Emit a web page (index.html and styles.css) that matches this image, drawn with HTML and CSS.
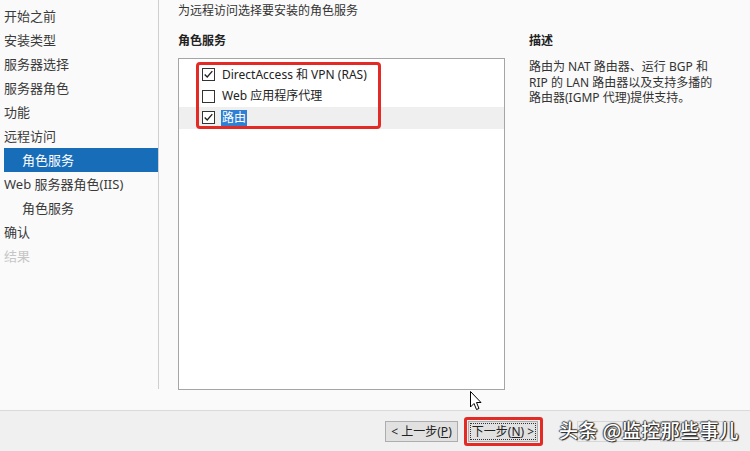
FILE: index.html
```html
<!DOCTYPE html>
<html lang="zh-CN">
<head>
<meta charset="utf-8">
<title>角色服务</title>
<link rel="stylesheet" href="styles.css">
</head>
<body>
<div class="window">
  <div class="main">
    <nav class="nav">
      <div class="nav-item">开始之前</div>
      <div class="nav-item">安装类型</div>
      <div class="nav-item">服务器选择</div>
      <div class="nav-item">服务器角色</div>
      <div class="nav-item">功能</div>
      <div class="nav-item">远程访问</div>
      <div class="nav-item sub active">角色服务</div>
      <div class="nav-item">Web 服务器角色(IIS)</div>
      <div class="nav-item sub">角色服务</div>
      <div class="nav-item">确认</div>
      <div class="nav-item disabled">结果</div>
    </nav>
    <section class="content">
      <div class="subtitle">为远程访问选择要安装的角色服务</div>
      <div class="grid">
        <div class="heading">角色服务</div>
        <div class="heading">描述</div>
        <div class="listbox">
          <div class="row">
            <span class="cb checked"><svg viewBox="0 0 13 13" width="11" height="11"><path d="M2 6.5 L5 9.5 L11 2.5" fill="none" stroke="#222" stroke-width="1.6"/></svg></span>
            <span class="label">DirectAccess 和 VPN (RAS)</span>
          </div>
          <div class="row">
            <span class="cb"></span>
            <span class="label">Web 应用程序代理</span>
          </div>
          <div class="row selected">
            <span class="cb checked"><svg viewBox="0 0 13 13" width="11" height="11"><path d="M2 6.5 L5 9.5 L11 2.5" fill="none" stroke="#222" stroke-width="1.6"/></svg></span>
            <span class="label hl">路由</span>
          </div>
          <div class="redbox"></div>
        </div>
        <div class="desc">路由为 NAT 路由器、运行 BGP 和<br>RIP 的 LAN 路由器以及支持多播的<br>路由器(IGMP 代理)提供支持。</div>
      </div>
    </section>
  </div>
  <div class="bottombar">
    <button class="btn prev">&lt; 上一步(<u>P</u>)</button>
    <span class="focus-wrap"><button class="btn next"><span class="dotted">下一步(<u>N</u>) &gt;</span></button></span>
    <span class="btn faint install"></span>
    <span class="btn faint cancel"></span>
  </div>
  <div class="watermark">头条 @监控那些事儿</div>
  <svg class="cursor" viewBox="0 0 12 20" width="12" height="20"><path d="M0.5 0.5 L0.5 16 L4 12.5 L6.5 18.5 L9 17.5 L6.5 11.5 L11 11.5 Z" fill="#fff" stroke="#000" stroke-width="1"/></svg>
</div>
</body>
</html>
```
FILE: styles.css
```css
* { box-sizing: border-box; }
html, body { margin: 0; padding: 0; }
body {
  width: 750px;
  height: 451px;
  overflow: hidden;
  background: #fafafa;
  font-family: "Noto Sans", "Noto Sans CJK SC", sans-serif;
  color: #333;
}
.window { position: relative; width: 750px; height: 451px; }
.main { display: flex; height: 410px; }
.nav {
  width: 159px;
  height: 389px;
  padding: 4px 0 0 4px;
  border-right: 1px solid #cfcfcf;
  font-size: 13px;
}
.nav-item { height: 24px; line-height: 24px; color: #3a3a3a; white-space: nowrap; }
.nav-item.sub { padding-left: 18px; }
.nav-item.active { background: #186db9; color: #fff; }
.nav-item.disabled { color: #c6c6c6; }
.content { flex: 1; padding-left: 19px; }
.subtitle { font-size: 12px; line-height: 22px; height: 22px; color: #333; }
.grid {
  display: grid;
  grid-template-columns: 327px 200px;
  column-gap: 24px;
  margin-top: 9px;
}
.heading { font-size: 12px; font-weight: bold; line-height: 20px; height: 27px; color: #222; }
.listbox {
  position: relative;
  height: 332px;
  border: 1px solid #a5a5a5;
  background: #fff;
  padding-top: 5px;
}
.row {
  display: flex;
  align-items: center;
  height: 21.5px;
  padding-left: 23px;
  font-size: 12px;
}
.row.selected { background: #efefef; }
.cb {
  width: 13px; height: 13px;
  border: 1px solid #333;
  background: #fff;
  display: flex; align-items: center; justify-content: center;
  flex: none;
}
.label { margin-left: 7px; color: #222; line-height: 16px; }
.label.hl { background: #2f7fd3; color: #fff; padding: 0 1px; margin-left: 6px; }
.redbox {
  position: absolute;
  left: 17px; top: 3px;
  width: 185px; height: 67px;
  border: 3px solid #e42a24;
  border-radius: 4px;
}
.desc { font-size: 12px; line-height: 15.6px; color: #333; padding-top: 1px; }
.bottombar {
  height: 41px;
  border-top: 1px solid #dadada;
  background: #f0f0f0;
  display: flex;
  align-items: center;
  justify-content: flex-end;
  padding-right: 17px;
}
.btn {
  font-family: "Noto Sans", "Noto Sans CJK SC", sans-serif;
  font-size: 12px;
  height: 21px;
  padding: 0;
  background: #e1e1e1;
  border: 1px solid #adadad;
  color: #222;
  display: flex; align-items: center; justify-content: center;
  white-space: nowrap;
}
.prev { width: 73px; margin-right: 6px; }
.focus-wrap {
  border: 3px solid #e42a24;
  border-radius: 3px;
  padding: 1px 2px 1px 1px;
  display: flex;
}
.next { width: 70px; padding: 1px; }
.dotted { border: 1px dotted #333; padding: 0 2px; line-height: 15px; width: 100%; height: 100%; display: flex; align-items: center; justify-content: center; }
.faint { background: transparent; border-color: #d6d6d6; width: 63px; }
.install { margin-left: 34px; }
.cancel { margin-left: 20px; width: 73px; }
.watermark {
  position: absolute;
  left: 559px; top: 417px;
  font-family: "Noto Sans CJK SC", sans-serif;
  font-size: 19px;
  font-weight: 500;
  letter-spacing: 0.5px;
  line-height: 26px;
  color: #fff;
  text-shadow: 1px 1px 1px #222, -1px 0 1px #444, 0 -1px 1px #444, 1px 0 1px #444;
  white-space: nowrap;
}
.cursor { position: absolute; left: 470px; top: 391px; }
```
